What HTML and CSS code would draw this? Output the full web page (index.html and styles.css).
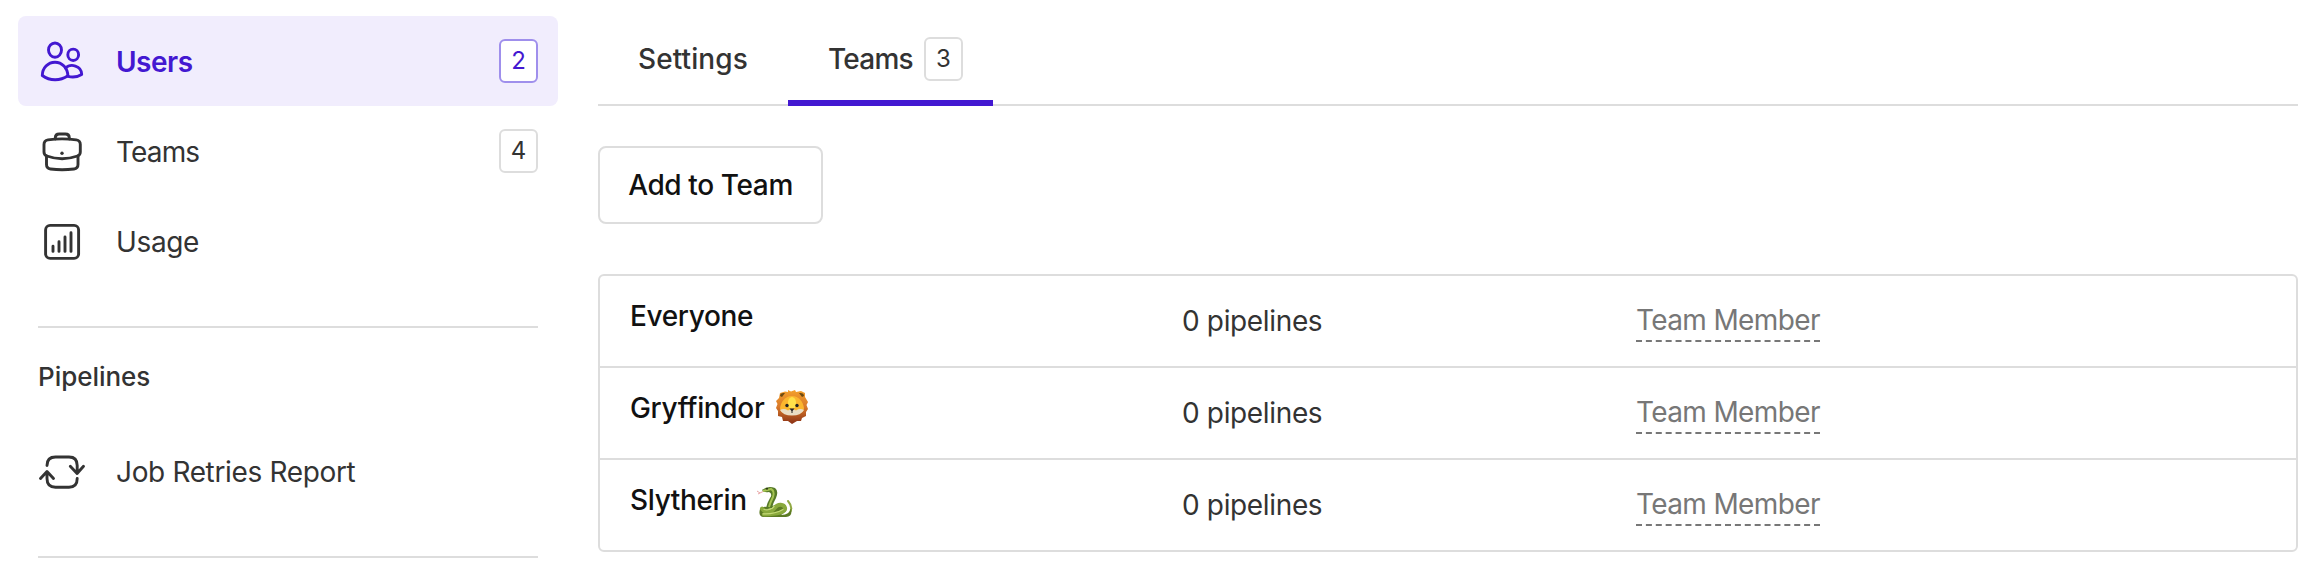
FILE: index.html
```html
<!DOCTYPE html>
<html lang="en">
<head>
<meta charset="utf-8">
<title>Users</title>
<link rel="stylesheet" href="styles.css">
</head>
<body>
<div class="page">
  <aside class="sidebar">
    <nav class="nav">
      <a class="nav-item nav-item-active">
        <svg class="icon" viewBox="0 -0.5 48 48"><ellipse cx="17" cy="12.6" rx="6.5" ry="7.1"/><ellipse cx="35.2" cy="17.3" rx="5.4" ry="5.7"/><path d="M4.3 38C4.3 30.5 10 24.7 17 24.7S29.6 30.5 29.9 38.3C22 43.7 12 43.7 4.3 38Z"/><path d="M27.5 30.7C32.5 25.5 43.5 28 43.7 36.9C39.5 39.5 34 39.8 30 38.8"/></svg>
        <span class="nav-label">Users</span><span class="badge badge-active">2</span>
      </a>
      <a class="nav-item">
        <svg class="icon" viewBox="0 -1 48 48"><path d="M17.3 11V10Q17.3 6 21.3 6H27.3Q31.3 6 31.3 10V11"/><path d="M10 11.9Q24 9.9 38.3 11.9Q42.3 12.5 42.3 16.5V24Q42.3 27 39.5 28Q24 33.5 8.8 28Q6 27 6 24V16.5Q6 12.5 10 11.9Z"/><path d="M8.5 28V36.5Q8.5 40.5 12.5 41Q24 42.4 36 41Q40 40.5 40 36.5V28"/><circle class="dot" cx="24" cy="25.3" r="1.7"/></svg>
        <span class="nav-label nav-label-tight">Teams</span><span class="badge">4</span>
      </a>
      <a class="nav-item">
        <svg class="icon" viewBox="0 -1 48 48"><rect x="7.6" y="7.4" width="33" height="33" rx="4.5"/><path d="M15 28.2V33.4M21 23.7V33.4M27 19V33.4M33 14.8V33.4"/></svg>
        <span class="nav-label">Usage</span>
      </a>
    </nav>
    <hr class="divider">
    <h2 class="nav-heading">Pipelines</h2>
    <nav class="nav">
      <a class="nav-item">
        <svg class="icon" viewBox="0 -1 48 48"><path d="M9 17.5C9 11.5 12 9 17.5 9H31C36.5 9 39.2 11.5 39.2 17.5V25.5M32.3 18.3L39.1 25.5L45.5 18.3"/><path d="M39.2 30.5C39.2 36.5 36.5 39.2 31 39.2H17.5C12 39.2 9 36.5 9 30.5V24M2.5 30.5L9 23.5L15.5 30.5"/></svg>
        <span class="nav-label">Job Retries Report</span>
      </a>
    </nav>
    <hr class="divider">
  </aside>
  <main class="content">
    <div class="tabs">
      <a class="tab">Settings</a>
      <a class="tab tab-active"><span class="tab-label">Teams</span><span class="badge">3</span></a>
    </div>
    <button class="button" type="button">Add to Team</button>
    <div class="table">
      <div class="row"><div class="team">Everyone</div><div class="count">0 pipelines</div><div class="role"><span class="role-label">Team Member</span></div></div>
      <div class="row"><div class="team">Gryffindor
        <svg class="emoji emoji-lion" viewBox="0 0 32 34" role="img" aria-label="lion"><defs><linearGradient id="mane" x2="0" y2="1"><stop offset="0" stop-color="#f3a02c"/><stop offset=".5" stop-color="#d9792a"/><stop offset="1" stop-color="#8a3115"/></linearGradient></defs><path fill="url(#mane)" d="M4 3L9 1.5L12 2L12 0L15 1.5L19 0L20 2L25 1L29 3L29 7L32 12L30.5 15L32 19L30 22L30 26L26 28L25 31L21 31L16 34L12 31L7 31L6 27L2 26L2 21L0 18L1.5 14L0 11L3 8Z"/><path fill="#6d4b12" d="M4 6Q4 2.5 9 3L6 7ZM28 6Q28 2.5 23 3L26 7Z"/><path fill="#fbb62e" d="M16 6C23 6 27 12 28 18C28 23 21 25 16 25S4 23 4 18C5 12 9 6 16 6Z"/><path fill="#ffe04a" d="M16 7C20 8 21 12 19 18H13C11 12 12 8 16 7Z"/><path fill="#e9dcc3" d="M4 20Q8 18 12 20.5L16 18.5L20 20.5Q24 18 28 20Q25 25.5 16 25.5T4 20Z"/><circle cx="11" cy="15.5" r="1.7" fill="#222"/><circle cx="21" cy="15.5" r="1.7" fill="#222"/><path fill="#222" d="M13.5 18.5H18.5L16.5 21V23H15.5V21Z"/></svg>
      </div><div class="count">0 pipelines</div><div class="role"><span class="role-label">Team Member</span></div></div>
      <div class="row"><div class="team">Slytherin
        <svg class="emoji emoji-snake" viewBox="0 0 36 32" role="img" aria-label="snake"><path fill="none" stroke="#e8a5a5" d="M6 5.5L3 7L0 5M3 7L1 8"/><path fill="none" stroke="#91a944" stroke-width="2" stroke-linecap="round" d="M31 15Q37 22 32 28"/><path fill="#5c7b24" d="M24 29Q33 29 34 22Q36 31 29 31H6Q1 30 3 23Q6 20 10 21L24 18Q31 18 29 25Z"/><path fill="none" stroke="#89a93c" stroke-width="4" stroke-linecap="round" d="M5 22.5C9 28 15 25.5 18 21.5S27 18 28 22S21 28 7 28.5"/><path fill="none" stroke="#c4d977" stroke-width="1.2" stroke-linecap="round" d="M6 27.8Q17 28.5 26 23.5M7 23.5Q13 25 17 20.5"/><path fill="#567a28" d="M5 4Q11 -1 18 2Q22 5 19 12Q16 17 15 22L9 22Q10 17 13 12Q16 8 12 6Q7 7 5 4Z"/><path fill="none" stroke="#a5c352" stroke-width="2" d="M6 5Q11 4 14 3Q18 5 16 11Q13 17 12 21"/><circle cx="10" cy="2.8" r="1" fill="#2a3310"/></svg>
      </div><div class="count">0 pipelines</div><div class="role"><span class="role-label">Team Member</span></div></div>
    </div>
  </main>
</div>
</body>
</html>
```
FILE: styles.css
```css
* { box-sizing: border-box; }
body {
  margin: 0;
  background: #fff;
  color: #333;
  font: 400 28px/40px Inter, "Liberation Sans", sans-serif;
  letter-spacing: -0.35px;
}
.page { display: flex; height: 582px; overflow: hidden; }
.sidebar { width: 558px; padding: 16px 0 0 18px; }
.nav-item { display: flex; align-items: center; height: 90px; padding: 0 20px; border-radius: 8px; }
.nav-item-active { background: #f1edfd; color: #4318d1; font-weight: 600; letter-spacing: -0.5px; }
.icon { flex: none; width: 48px; height: 48px; margin-right: 30px; fill: none; stroke: currentColor; stroke-width: 2.9; stroke-linecap: round; stroke-linejoin: round; }
.dot { fill: currentColor; stroke: none; }
.nav-label { flex: 1; padding-top: 1px; }
.nav-label-tight { letter-spacing: -0.85px; }
.badge {
  flex: none; width: 39px; height: 44px;
  border: 2px solid #ddd; border-radius: 6px;
  background: #fff;
  font-size: 24px; font-weight: 400; line-height: 40px; letter-spacing: 0; text-align: center;
}
.badge-active { border-color: #9f8fec; }
.divider { height: 2px; margin: 40px 20px 0; border: 0; background: #ddd; }
.nav-heading { margin: 29px 20px 29px; font-size: 26px; font-weight: 500; line-height: 40px; letter-spacing: -0.05px; }
.content { width: 1740px; padding-left: 40px; }
.tabs { display: flex; height: 106px; border-bottom: 2px solid #ddd; font-weight: 500; }
.tab { display: flex; align-items: center; width: 190px; height: 106px; padding: 12px 0 0 40px; letter-spacing: 0.1px; }
.tab-label { flex: 1; letter-spacing: -0.75px; }
.tab-active { width: 205px; padding: 18px 30px 0 40px; border-bottom: 6px solid #4318d1; }
.button {
  display: block; width: 225px; height: 78px; margin: 40px 0 50px; padding: 0;
  border: 2px solid #ddd; border-radius: 8px; background: #fff;
  color: #111; font: inherit; font-weight: 500; letter-spacing: -0.38px;
}
.table { border: 2px solid #ddd; border-radius: 6px; }
.row { display: grid; grid-template-columns: 582px 454px 1fr; height: 92px; padding-top: 20px; border-bottom: 2px solid #ddd; }
.row:last-child { height: 90px; border-bottom: 0; }
.team { display: flex; padding-left: 30px; color: #111; font-weight: 500; }
.emoji { margin-left: 10px; }
.emoji-lion { width: 32px; height: 34px; margin: 2px 0 0 12px; }
.emoji-snake { width: 36px; height: 32px; margin-top: 6px; }
.count { padding-top: 5px; }
.role-label { display: inline-block; padding-top: 4px; height: 46px; border-bottom: 2px dashed #777; color: #777; letter-spacing: -0.63px; }
```
